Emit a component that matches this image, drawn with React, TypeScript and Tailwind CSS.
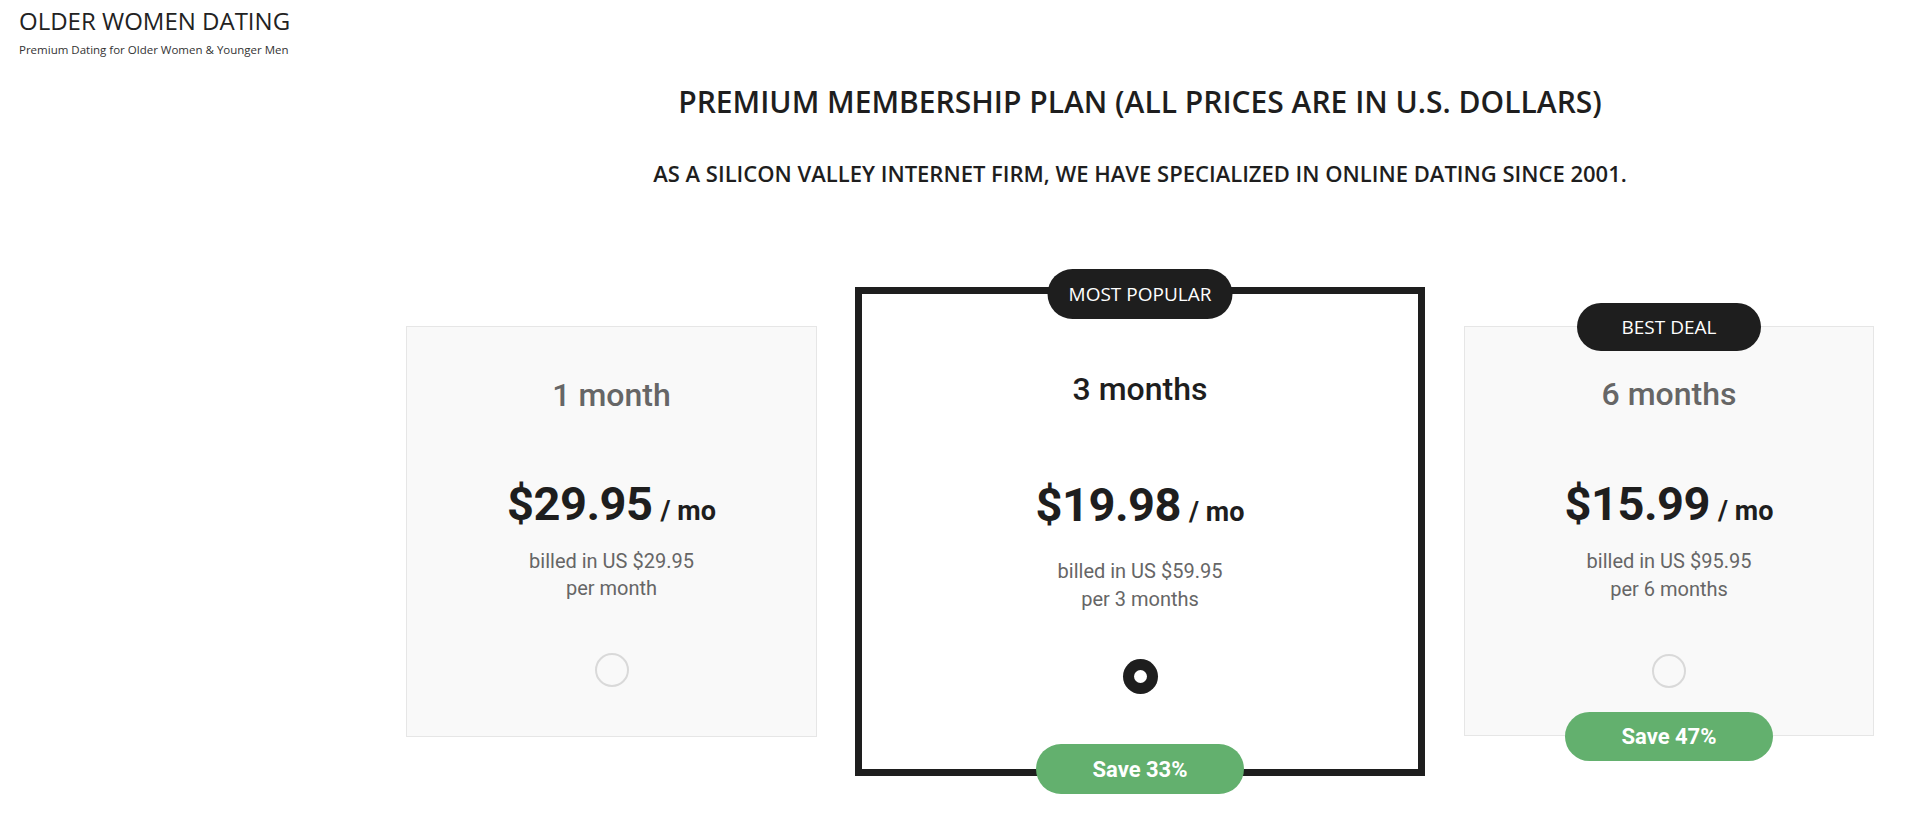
import React from "react";

type Plan = {
  title: string;
  price: string;
  billed: string;
  per: string;
  selected?: boolean;
};

type Spacing = { title: string; price: string; billed: string; radio: string };

function Radio({ selected }: { selected?: boolean }) {
  if (selected) {
    return (
      <div className="w-[35px] h-[35px] rounded-full bg-[#1e1e1e] flex items-center justify-center">
        <div className="w-[13px] h-[13px] rounded-full bg-white" />
      </div>
    );
  }
  return <div className="w-[34px] h-[34px] rounded-full border-2 border-[#d9d9d9]" />;
}

function CardBody({ plan, dark, s }: { plan: Plan; dark?: boolean; s: Spacing }) {
  return (
    <div className="flex flex-col items-center">
      <div className={`${s.title} text-[32px] leading-[40px] font-medium ${dark ? "text-[#1e1e1e]" : "text-[#666666]"}`}>
        {plan.title}
      </div>
      <div className={`${s.price} text-[47px] leading-[56px] tracking-[-0.5px] text-[#1e1e1e] font-bold whitespace-nowrap`}>
        {plan.price}
        <span className="text-[27px] leading-none tracking-normal ml-[8px]">/ mo</span>
      </div>
      <div className={`${s.billed} text-[20px] text-[#666666] text-center`}>
        <div>{plan.billed}</div>
        <div>{plan.per}</div>
      </div>
      <div className={s.radio}>
        <Radio selected={plan.selected} />
      </div>
    </div>
  );
}

export default function App() {
  const roboto = { fontFamily: "Roboto, 'Liberation Sans', sans-serif" };
  const open = { fontFamily: "'Open Sans', 'Liberation Sans', sans-serif" };
  return (
    <div className="w-full h-[836px] bg-white overflow-hidden" style={roboto}>
      <header className="pl-[19px] pt-[5px]" style={open}>
        <div className="text-[24px] leading-[32px] text-[#222222]">OLDER WOMEN DATING</div>
        <div className="mt-[5px] text-[11.5px] leading-[16px] text-[#333333]">Premium Dating for Older Women &amp; Younger Men</div>
      </header>

      <main className="pl-[360px]">
        <div className="flex flex-col items-center">
          <h1 className="mt-[26px] text-[30px] leading-[36px] font-semibold text-[#1e1e1e] whitespace-nowrap" style={open}>
            PREMIUM MEMBERSHIP PLAN (ALL PRICES ARE IN U.S. DOLLARS)
          </h1>
          <h2 className="mt-[39px] text-[22px] leading-[28px] font-semibold text-[#1e1e1e] whitespace-nowrap" style={open}>
            AS A SILICON VALLEY INTERNET FIRM, WE HAVE SPECIALIZED IN ONLINE DATING SINCE 2001.
          </h2>

          <div className="mt-[100px] flex items-start">
            {/* 1 month */}
            <div className="mt-[39px] w-[411px] h-[411px] border border-[#e6e6e6] bg-[#f9f9f9]">
              <CardBody
                plan={{ title: "1 month", price: "$29.95", billed: "billed in US $29.95", per: "per month" }}
                s={{ title: "mt-[48px]", price: "mt-[61px]", billed: "mt-[16px] leading-[27px]", radio: "mt-[51px]" }}
              />
            </div>

            {/* 3 months */}
            <div className="relative ml-[38px] w-[570px] h-[489px] border-[7px] border-[#1e1e1e] bg-white">
              <div
                className="absolute left-1/2 -translate-x-1/2 top-[-25px] w-[185px] h-[50px] rounded-full bg-[#1e1e1e] text-white text-[19px] flex items-center justify-center whitespace-nowrap"
                style={open}
              >
                MOST POPULAR
              </div>
              <CardBody
                dark
                plan={{ title: "3 months", price: "$19.98", billed: "billed in US $59.95", per: "per 3 months", selected: true }}
                s={{ title: "mt-[75px]", price: "mt-[68px]", billed: "mt-[24px] leading-[28px]", radio: "mt-[46px]" }}
              />
              <div className="absolute left-1/2 -translate-x-1/2 bottom-[-25px] w-[208px] h-[50px] rounded-full bg-[#63b06e] text-white text-[22px] font-bold flex items-center justify-center whitespace-nowrap">
                Save 33%
              </div>
            </div>

            {/* 6 months */}
            <div className="relative mt-[39px] ml-[39px] w-[410px] h-[410px] border border-[#e6e6e6] bg-[#f9f9f9]">
              <div
                className="absolute left-1/2 -translate-x-1/2 top-[-24px] w-[184px] h-[48px] rounded-full bg-[#1e1e1e] text-white text-[19px] flex items-center justify-center whitespace-nowrap"
                style={open}
              >
                BEST DEAL
              </div>
              <CardBody
                plan={{ title: "6 months", price: "$15.99", billed: "billed in US $95.95", per: "per 6 months" }}
                s={{ title: "mt-[47px]", price: "mt-[62px]", billed: "mt-[15px] leading-[28px]", radio: "mt-[51px]" }}
              />
              <div className="absolute left-1/2 -translate-x-1/2 bottom-[-26px] w-[208px] h-[49px] rounded-full bg-[#63b06e] text-white text-[22px] font-bold flex items-center justify-center whitespace-nowrap">
                Save 47%
              </div>
            </div>
          </div>
        </div>
      </main>
    </div>
  );
}
